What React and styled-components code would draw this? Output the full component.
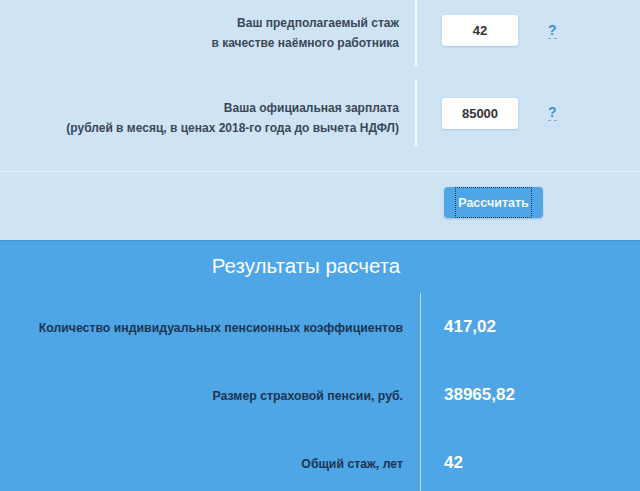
import styled, { createGlobalStyle } from "styled-components";

const GlobalStyle = createGlobalStyle`
  body {
    margin: 0;
    font-family: "Liberation Sans", Arial, sans-serif;
    background: #4ea6e7;
  }
`;

const fields = [
  { label: ["Ваш предполагаемый стаж", "в качестве наёмного работника"], value: "42" },
  {
    label: ["Ваша официальная зарплата", "(рублей в месяц, в ценах 2018-го года до вычета НДФЛ)"],
    value: "85000",
  },
];

const results = [
  { label: "Количество индивидуальных пенсионных коэффициентов", value: "417,02" },
  { label: "Размер страховой пенсии, руб.", value: "38965,82" },
  { label: "Общий стаж, лет", value: "42" },
];

const App = () => (
  <>
    <GlobalStyle />
    <Page>
      <FormSection>
        <Fields>
          {fields.map((f, i) => (
            <FieldRow key={i}>
              <FieldLabel first={i === 0}>
                {f.label.map((l) => (
                  <span key={l}>{l}</span>
                ))}
              </FieldLabel>
              <FieldControl first={i === 0}>
                <Input defaultValue={f.value} />
                <Hint>?</Hint>
              </FieldControl>
            </FieldRow>
          ))}
        </Fields>
        <Separator />
        <ButtonRow>
          <Button>
            <Focus>Рассчитать</Focus>
          </Button>
        </ButtonRow>
      </FormSection>
      <ResultsSection>
        <Title>Результаты расчета</Title>
        <Results>
          {results.map((r) => (
            <ResultRow key={r.label}>
              <ResultLabel>{r.label}</ResultLabel>
              <ResultValue>{r.value}</ResultValue>
            </ResultRow>
          ))}
        </Results>
      </ResultsSection>
    </Page>
  </>
);

const Page = styled.div`
  width: 640px;
  height: 491px;
  overflow: hidden;
`;

const FormSection = styled.div`
  background: #cee4f5;
  height: 240px;
  display: flex;
  flex-direction: column;
`;

const Fields = styled.div`
  display: flex;
  flex-direction: column;
  gap: 14px;
`;

const FieldRow = styled.div`
  display: grid;
  grid-template-columns: 417px 1fr;
  height: 66px;
`;

const FieldLabel = styled.div`
  display: flex;
  flex-direction: column;
  justify-content: center;
  align-items: flex-end;
  padding-right: 16px;
  padding-top: ${(p) => (p.first ? "0" : "10px")};
  border-right: 2px solid #f4f9fd;
  font-size: 12px;
  line-height: 20px;
  font-weight: bold;
  color: #3a4757;
  text-align: right;
  white-space: nowrap;
`;

const FieldControl = styled.div`
  display: flex;
  align-items: center;
  padding-left: 25px;
  padding-bottom: ${(p) => (p.first ? "5px" : "0")};
  gap: 30px;
`;

const Input = styled.input`
  width: 76px;
  height: 31px;
  box-sizing: border-box;
  border: none;
  border-radius: 3px;
  background: #fff;
  box-shadow: 0 1px 2px rgba(60, 110, 150, 0.25);
  font-family: inherit;
  font-size: 13px;
  font-weight: bold;
  color: #333;
  text-align: center;
  outline: none;
`;

const Hint = styled.span`
  font-size: 14px;
  font-weight: bold;
  color: #3b90c8;
  line-height: 14px;
  padding-bottom: 1px;
  border-bottom: 1px dashed #7fb0d0;
`;

const Separator = styled.div`
  height: 1px;
  background: #e6f1fa;
  margin-top: 25px;
`;

const ButtonRow = styled.div`
  padding: 15px 0 0 444px;
`;

const Button = styled.button`
  width: 99px;
  height: 31px;
  padding: 0;
  border: none;
  border-radius: 4px;
  background: #4ea6e6;
  box-shadow: 0 1px 2px rgba(40, 100, 160, 0.3);
  display: flex;
  justify-content: center;
  align-items: stretch;
  cursor: pointer;
`;

const Focus = styled.span`
  display: flex;
  align-items: center;
  padding: 0 2px;
  border: 1px dotted #1d3650;
  font-family: "Liberation Sans", Arial, sans-serif;
  font-size: 12.5px;
  font-weight: bold;
  color: #f2f8fd;
`;

const ResultsSection = styled.div`
  background: #4ea6e7;
  border-top: 1px solid #3f97d9;
  height: 251px;
`;

const Title = styled.div`
  padding: 13px 28px 0 0;
  height: 39px;
  text-align: center;
  font-size: 20.5px;
  line-height: 24px;
  color: #fff;
`;

const Results = styled.div`
  display: flex;
  flex-direction: column;
`;

const ResultRow = styled.div`
  display: grid;
  grid-template-columns: 420px 1fr;
  height: 68px;
`;

const ResultLabel = styled.div`
  display: flex;
  align-items: center;
  justify-content: flex-end;
  padding-right: 17px;
  padding-top: 2px;
  font-size: 12.3px;
  font-weight: bold;
  color: #1d3452;
  white-space: nowrap;
`;

const ResultValue = styled.div`
  display: flex;
  align-items: center;
  padding-left: 23px;
  border-left: 1px solid #b8dcf6;
  font-size: 17px;
  font-weight: bold;
  color: #fff;
`;

export default App;
